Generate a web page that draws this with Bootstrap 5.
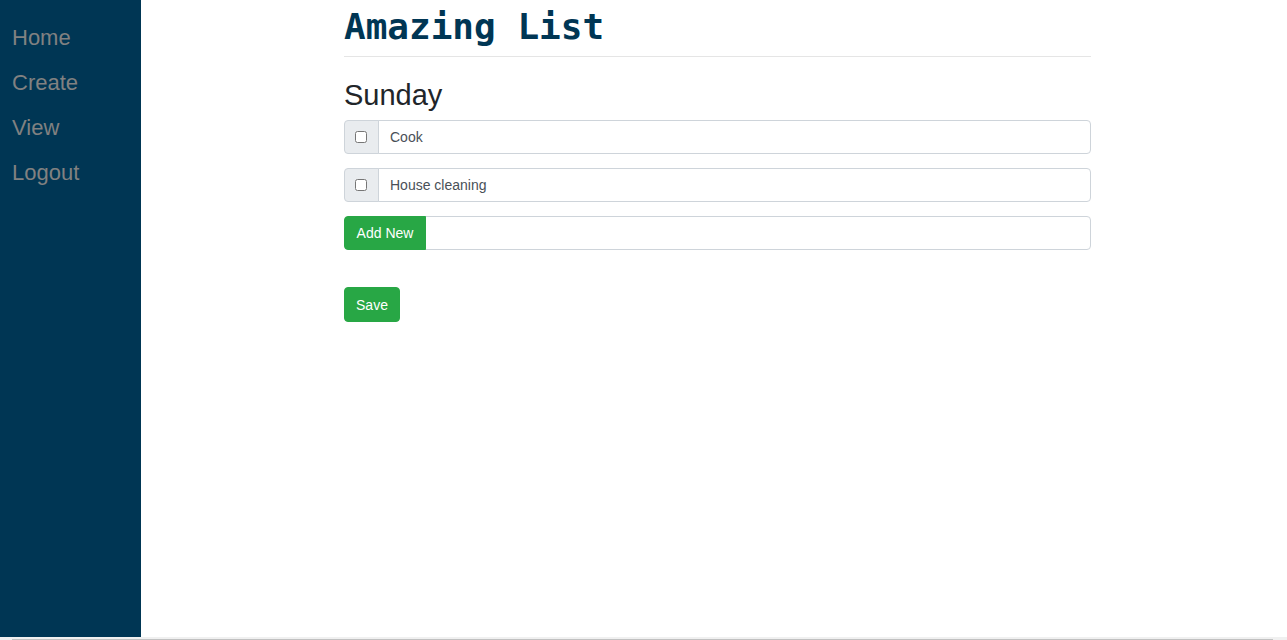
<!DOCTYPE html>
<html lang="en">
<head>
<meta charset="utf-8">
<meta name="viewport" content="width=device-width, initial-scale=1">
<title>Amazing List</title>
<link href="https://cdn.jsdelivr.net/npm/bootstrap@5.3.0/dist/css/bootstrap.min.css" rel="stylesheet">
<style>
  body { font-family: "Liberation Sans", Arial, sans-serif; font-size: 14px; color: #212529; }
  .side-menu { width: 141px; background: #003654; padding-top: 15px; }
  .side-menu a { font-size: 22px; line-height: 31px; padding: 7px 12px; color: #818181; text-decoration: none; }
  .side-menu a:hover { color: #f1f1f1; }
  .side-menu li:nth-child(odd) { line-height: 31px; }
  .content-area { padding-left: 203px; padding-right: 196px; }
  .list-title { font: bold 36px/42px "DejaVu Sans Mono", monospace; color: #003654; padding-top: 6px; margin: 0; }
  .title-rule { border-color: #000; opacity: .1; margin: 8px 0 21px; }
  .day-title { font-size: 29px; line-height: 34px; font-weight: 400; margin: 0 0 8px; }
  .todo-row { height: 34px; margin-bottom: 14px; }
  .todo-row .input-group-text { width: 35px; padding: 0 0 0 10px; background: #e9ecef; border-color: #ced4da; border-radius: 4px; }
  .todo-row input[type="checkbox"] { width: 12px; height: 12px; margin: 0; }
  .todo-row .form-control { font-size: 14px; line-height: 20px; padding: 6px 11px; color: #495057; border-color: #ced4da; border-radius: 4px; }
  .btn-list { font-size: 14px; line-height: 20px; padding: 6px 11px; border-radius: 4px;
    --bs-btn-bg: #28a745; --bs-btn-border-color: #28a745; --bs-btn-hover-bg: #218838; --bs-btn-hover-border-color: #1e7e34; }
  .todo-row .btn-list { width: 82px; padding: 5px 0; }
  .btn-save { width: 56px; height: 35px; padding: 6px 0; margin-top: 23px; }
  .scroll-track { height: 3px; background: #f0f0f0; padding: 2px 14px 0 12px; }
  .scroll-thumb { height: 1px; background: #c1c1c1; }
</style>
</head>
<body class="d-flex flex-column vh-100 overflow-hidden">
  <div class="d-flex flex-grow-1">
    <nav class="side-menu flex-shrink-0" aria-label="Main">
      <ul class="list-unstyled mb-0">
        <li><a class="d-block" href="#">Home</a></li>
        <li><a class="d-block" href="#">Create</a></li>
        <li><a class="d-block" href="#">View</a></li>
        <li><a class="d-block" href="#">Logout</a></li>
      </ul>
    </nav>
    <main class="content-area flex-grow-1">
      <h1 class="list-title">Amazing List</h1>
      <hr class="title-rule">
      <form>
        <h2 class="day-title">Sunday</h2>
        <div class="input-group todo-row">
          <div class="input-group-text"><input type="checkbox" aria-label="Cook done"></div>
          <input type="text" class="form-control" value="Cook" aria-label="First task">
        </div>
        <div class="input-group todo-row">
          <div class="input-group-text"><input type="checkbox" aria-label="House cleaning done"></div>
          <input type="text" class="form-control" value="House cleaning" aria-label="Second task">
        </div>
        <div class="input-group todo-row">
          <button type="button" class="btn btn-success btn-list">Add New</button>
          <input type="text" class="form-control" aria-label="New task">
        </div>
        <button type="submit" class="btn btn-success btn-list btn-save">Save</button>
      </form>
    </main>
  </div>
  <div class="scroll-track"><div class="scroll-thumb"></div></div>
<script src="https://cdn.jsdelivr.net/npm/bootstrap@5.3.0/dist/js/bootstrap.bundle.min.js"></script>
</body>
</html>
